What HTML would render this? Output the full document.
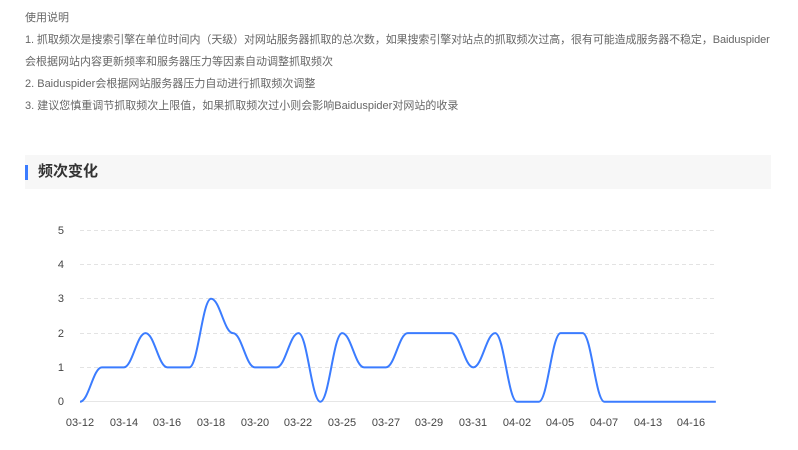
<!DOCTYPE html>
<html><head><meta charset="utf-8"><style>
body{margin:0;width:798px;height:450px;background:#fff;position:relative;overflow:hidden;font-family:"Liberation Sans","Noto Sans CJK SC",sans-serif;}
.t{position:absolute;left:25px;font-size:11px;color:#666;white-space:nowrap;line-height:14px}
.hd{position:absolute;left:25px;top:155px;width:746px;height:34px;background:#f7f7f7}
.bar{position:absolute;left:0;top:10px;width:3px;height:15px;background:#3b7cff}
.ht{position:absolute;left:13px;top:8px;font-size:15px;font-weight:bold;color:#333;line-height:18px}
</style></head><body>
<div class="t" style="top:11px">使用说明</div>
<div class="t" style="top:33px;letter-spacing:-0.1px">1. 抓取频次是搜索引擎在单位时间内（天级）对网站服务器抓取的总次数，如果搜索引擎对站点的抓取频次过高，很有可能造成服务器不稳定，Baiduspider</div>
<div class="t" style="top:55px">会根据网站内容更新频率和服务器压力等因素自动调整抓取频次</div>
<div class="t" style="top:77px">2. Baiduspider会根据网站服务器压力自动进行抓取频次调整</div>
<div class="t" style="top:99px">3. 建议您慎重调节抓取频次上限值，如果抓取频次过小则会影响Baiduspider对网站的收录</div>
<div class="hd"><div class="bar"></div><div class="ht">频次变化</div></div>
<svg width="798" height="450" style="position:absolute;left:0;top:0" font-family="Liberation Sans, sans-serif" font-size="11" fill="#444">
<g stroke="#e3e3e3" stroke-dasharray="4,3" stroke-width="1">
<line x1="80" x2="716" y1="230.5" y2="230.5"/><line x1="80" x2="716" y1="264.5" y2="264.5"/>
<line x1="80" x2="716" y1="298.5" y2="298.5"/><line x1="80" x2="716" y1="333.5" y2="333.5"/>
<line x1="80" x2="716" y1="367.5" y2="367.5"/></g>
<line x1="80" x2="716" y1="401.5" y2="401.5" stroke="#e6e6e6"/>
<g text-anchor="end"><text x="64" y="234">5</text><text x="64" y="268">4</text><text x="64" y="302">3</text><text x="64" y="337">2</text><text x="64" y="371">1</text><text x="64" y="405">0</text></g>
<g text-anchor="middle">
<text x="80" y="426">03-12</text><text x="124" y="426">03-14</text><text x="167" y="426">03-16</text><text x="211" y="426">03-18</text><text x="255" y="426">03-20</text><text x="298" y="426">03-22</text><text x="342" y="426">03-25</text><text x="386" y="426">03-27</text><text x="429" y="426">03-29</text><text x="473" y="426">03-31</text><text x="517" y="426">04-02</text><text x="560" y="426">04-05</text><text x="604" y="426">04-07</text><text x="648" y="426">04-13</text><text x="691" y="426">04-16</text></g>
<g transform="translate(80,401.7) scale(21.85,-34.3)">
<path fill="none" stroke="#3b7cff" stroke-width="2" vector-effect="non-scaling-stroke" d="M0 0 C0.4 0 0.6 1 1 1 S1.6 1 2 1 S2.6 2 3 2 S3.6 1 4 1 S4.6 1 5 1 S5.6 3 6 3 S6.6 2 7 2 S7.6 1 8 1 S8.6 1 9 1 S9.6 2 10 2 S10.6 0 11 0 S11.6 2 12 2 S12.6 1 13 1 S13.6 1 14 1 S14.6 2 15 2 S15.6 2 16 2 S16.6 2 17 2 S17.6 1 18 1 S18.6 2 19 2 S19.6 0 20 0 S20.6 0 21 0 S21.6 2 22 2 S22.6 2 23 2 S23.6 0 24 0 S24.6 0 25 0 L29.1 0"/>
</g>
</svg>
</body></html>
